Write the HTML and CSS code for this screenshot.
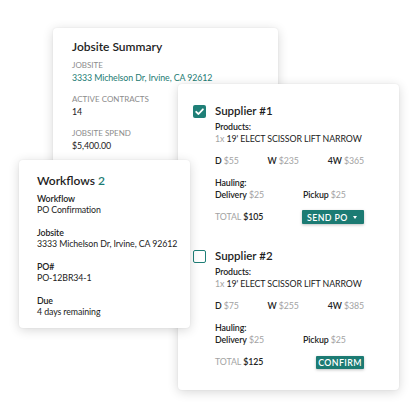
FILE: index.html
```html
<!DOCTYPE html>
<html lang="en">
<head>
<meta charset="utf-8">
<title>Jobsite</title>
<link rel="stylesheet" href="styles.css">
</head>
<body>
<div class="stage">
  <section class="card summary">
    <h2 class="title">Jobsite Summary</h2>
    <div class="field">
      <div class="label">JOBSITE</div>
      <div class="value link">3333 Michelson Dr, Irvine, CA 92612</div>
    </div>
    <div class="field">
      <div class="label">ACTIVE CONTRACTS</div>
      <div class="value">14</div>
    </div>
    <div class="field">
      <div class="label">JOBSITE SPEND</div>
      <div class="value">$5,400.00</div>
    </div>
  </section>

  <section class="card suppliers">
    <div class="supplier">
      <div class="sup-head">
        <span class="check on"><svg viewBox="0 0 13 13" width="13" height="13"><path d="M3.2 6.8 L5.5 9 L9.9 4.3" fill="none" stroke="#fff" stroke-width="1.8" stroke-linecap="round" stroke-linejoin="round"/></svg></span>
        <h3 class="sup-title">Supplier #1</h3>
      </div>
      <div class="sup-body">
        <div class="b">Products:</div>
        <div class="item"><span class="muted">1x</span> 19' ELECT SCISSOR LIFT NARROW</div>
        <div class="prices">
          <span><b>D</b> <span class="muted">$55</span></span>
          <span><b>W</b> <span class="muted">$235</span></span>
          <span><b>4W</b> <span class="muted">$365</span></span>
        </div>
        <div class="b hauling">Hauling:</div>
        <div class="two-col">
          <span><b>Delivery</b> <span class="muted">$25</span></span>
          <span><b>Pickup</b> <span class="muted">$25</span></span>
        </div>
        <div class="total-row">
          <span><span class="muted">TOTAL</span> <b>$105</b></span>
          <button class="btn send">SEND PO <span class="caret"></span></button>
        </div>
      </div>
    </div>

    <div class="supplier second">
      <div class="sup-head">
        <span class="check"></span>
        <h3 class="sup-title">Supplier #2</h3>
      </div>
      <div class="sup-body">
        <div class="b">Products:</div>
        <div class="item"><span class="muted">1x</span> 19' ELECT SCISSOR LIFT NARROW</div>
        <div class="prices">
          <span><b>D</b> <span class="muted">$75</span></span>
          <span><b>W</b> <span class="muted">$255</span></span>
          <span><b>4W</b> <span class="muted">$385</span></span>
        </div>
        <div class="b hauling">Hauling:</div>
        <div class="two-col">
          <span><b>Delivery</b> <span class="muted">$25</span></span>
          <span><b>Pickup</b> <span class="muted">$25</span></span>
        </div>
        <div class="total-row">
          <span><span class="muted">TOTAL</span> <b>$125</b></span>
          <button class="btn confirm">CONFIRM</button>
        </div>
      </div>
    </div>
  </section>

  <section class="card workflows">
    <h2 class="title">Workflows <span class="count">2</span></h2>
    <div class="wf">
      <div class="b">Workflow</div>
      <div>PO Confirmation</div>
    </div>
    <div class="wf">
      <div class="b">Jobsite</div>
      <div>3333 Michelson Dr, Irvine, CA 92612</div>
    </div>
    <div class="wf">
      <div class="b">PO#</div>
      <div>PO-12BR34-1</div>
    </div>
    <div class="wf">
      <div class="b">Due</div>
      <div>4 days remaining</div>
    </div>
  </section>
</div>
</body>
</html>
```

FILE: styles.css
```css
* { box-sizing: border-box; }
html, body { margin: 0; padding: 0; background: #fff; }
body {
  font-family: Lato, "Noto Sans", sans-serif;
  color: #222;
  font-size: 8.8px;
  letter-spacing: -0.1px;
}
.stage {
  position: relative;
  width: 420px;
  height: 420px;
}
.card {
  position: absolute;
  background: #fff;
  border-radius: 4px;
  box-shadow: 0 2px 11px rgba(0,0,0,0.16), 0 0 2px rgba(0,0,0,0.07);
}
.title {
  margin: 0;
  font-size: 12px;
  font-weight: 600;
  line-height: 16px;
  color: #1e1e1e;
  letter-spacing: 0;
}
b, .b { font-weight: 600; }

/* Jobsite summary */
.summary {
  left: 53px;
  top: 28px;
  width: 225px;
  height: 270px;
  padding: 11px 19px;
  z-index: 1;
}
.summary .title { margin-bottom: 5px; }
.field { line-height: 11.5px; margin-bottom: 11px; }
.label { font-size: 8px; color: #8c8c8c; letter-spacing: 0; }
.value { color: #222; }
.link { color: #1c7b73; }

/* Suppliers */
.suppliers {
  left: 178px;
  top: 84px;
  width: 221px;
  height: 306px;
  padding: 20px 30px 0 15px;
  z-index: 2;
}
.supplier.second { margin-top: 25px; }
.sup-head {
  display: flex;
  align-items: center;
  gap: 9px;
  height: 14px;
  margin-bottom: 3px;
}
.check {
  width: 13px;
  height: 13px;
  border-radius: 2px;
  border: 1.5px solid #1f7f77;
  flex: none;
  display: block;
}
.check.on { background: #1f7f77; border: none; }
.check svg { display: block; }
.sup-title {
  margin: 0;
  font-size: 11.5px;
  font-weight: 600;
  line-height: 14px;
  color: #1e1e1e;
  letter-spacing: 0;
}
.sup-body {
  padding-left: 22px;
  padding-right: 5px;
  line-height: 12px;
}
.muted { color: #a3a3a3; }
.prices {
  display: flex;
  justify-content: space-between;
  margin-top: 10px;
}
.hauling { margin-top: 10px; }
.two-col {
  display: grid;
  grid-template-columns: 88px 1fr;
}
.total-row {
  display: flex;
  justify-content: space-between;
  align-items: center;
  margin-top: 9px;
  height: 14px;
}
.btn {
  font-family: inherit;
  border: none;
  background: #1c7b73;
  color: #fff;
  font-weight: 600;
  font-size: 8.8px;
  letter-spacing: 0.4px;
  border-radius: 1px;
  box-shadow: 0 1px 3px rgba(0,0,0,0.25);
  display: flex;
  align-items: center;
  padding: 0;
}
.btn.send {
  width: 62px;
  height: 14px;
  padding-left: 5px;
  justify-content: flex-start;
}
.btn.send .caret {
  margin-left: auto;
  margin-right: 7px;
  width: 0;
  height: 0;
  border-left: 2.5px solid transparent;
  border-right: 2.5px solid transparent;
  border-top: 3px solid #fff;
}
.btn.confirm {
  width: 48px;
  height: 13px;
  justify-content: center;
}

/* Workflows */
.workflows {
  left: 19px;
  top: 160px;
  width: 171px;
  height: 168px;
  padding: 13px 8px 13px 18px;
  z-index: 3;
}
.workflows .title { margin-bottom: 3.5px; }
.count { color: #1c7b73; }
.wf { line-height: 11px; margin-bottom: 12px; white-space: nowrap; }
```
